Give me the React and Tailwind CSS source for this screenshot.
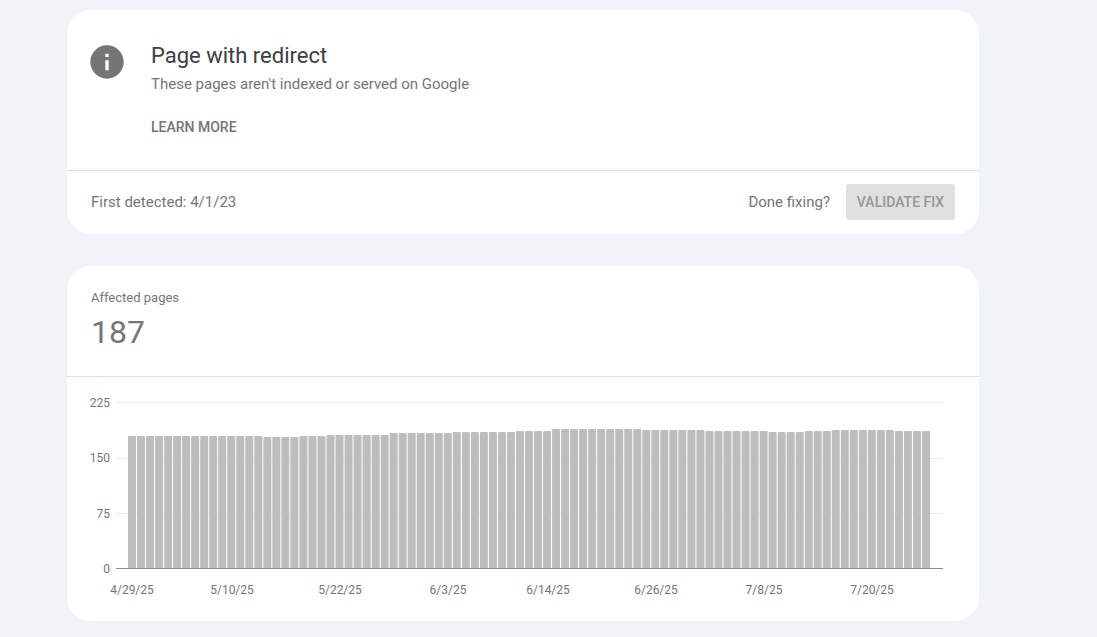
import { MdInfo } from 'react-icons/md'

// [days, affected pages]
const runs = [
  [15, 180],
  [4, 178],
  [3, 180],
  [7, 181],
  [7, 184],
  [7, 185],
  [4, 186],
  [10, 189],
  [7, 188],
  [7, 187],
  [4, 185],
  [3, 187],
  [7, 188],
  [4, 187],
]

const days = runs.flatMap(([count, pages]) => Array(count).fill(pages))

const dateLabels = [
  { day: 0, text: '4/29/25' },
  { day: 11, text: '5/10/25' },
  { day: 23, text: '5/22/25' },
  { day: 35, text: '6/3/25' },
  { day: 46, text: '6/14/25' },
  { day: 58, text: '6/26/25' },
  { day: 70, text: '7/8/25' },
  { day: 82, text: '7/20/25' },
]

const BASE = 192
const LEFT = 61
const STEP = 794 / 88
const BAR = 8

function yOf(value) {
  return BASE - (value / 225) * 166
}

function Bar({ day, pages }) {
  const x = LEFT + day * STEP
  const top = Math.round(yOf(pages) - 0.5)
  return (
    <path
      fill="#bdbdbd"
      d={`M${x} ${BASE - 1}V${top + 1}q0-1 1-1h${BAR - 2}q1 0 1 1V${BASE - 1}z`}
    />
  )
}

function PagesChart() {
  return (
    <svg viewBox="0 0 912 244" className="block w-full" role="img" aria-label="Affected pages">
      {[225, 150, 75].map(value => (
        <path key={value} d={`M49 ${Math.ceil(yOf(value)) - 0.5}H876`} stroke="#ebebeb" />
      ))}
      {days.map((pages, day) => (
        <Bar key={day} day={day} pages={pages} />
      ))}
      <path d={`M49 ${BASE - 0.5}H876`} stroke="#8f8f8f" />
      <g className="fill-[#757575] text-xs">
        {[225, 150, 75, 0].map(value => (
          <text key={value} x="43" y={Math.round(yOf(value)) + 4} textAnchor="end">
            {value}
          </text>
        ))}
        {dateLabels.map(label => (
          <text key={label.text} x={Math.ceil(LEFT + label.day * STEP + 4)} y="217" textAnchor="middle">
            {label.text}
          </text>
        ))}
      </g>
    </svg>
  )
}

export default function App() {
  return (
    <div className="min-h-screen bg-[#f0f3f8] pt-[10px] pb-4 pl-[67px] pr-[118px] font-['Roboto',sans-serif] text-[#757575]">
      <main className="flex flex-col gap-8">

        <section className="rounded-3xl bg-white">
          <div className="flex gap-6 px-5 pt-8 pb-6">
            <MdInfo className="size-10 shrink-0" />
            <div className="flex flex-col items-start">
              <h1 className="text-[22px] leading-7 text-[#3c4043]">Page with redirect</h1>
              <p className="mt-1 text-[15px] leading-5">These pages aren't indexed or served on Google</p>
              <a href="#learn" className="mt-4 pb-[2px] text-sm leading-[34px] font-medium">LEARN MORE</a>
            </div>
          </div>

          <div className="flex items-center justify-between border-t border-[#e0e0e0] px-6 pt-[13px] pb-[14px] text-[15px]">
            <p>First detected: 4/1/23</p>
            <div className="flex items-center gap-4">
              <p>Done fixing?</p>
              <button
                type="button"
                disabled
                className="h-9 min-w-[109px] rounded-[3px] bg-[#e0e0e0] px-2 text-sm font-medium text-[#969696]"
              >
                VALIDATE FIX
              </button>
            </div>
          </div>
        </section>

        <section className="rounded-3xl bg-white">
          <div className="border-b border-[#e0e0e0] px-6 pt-6 pb-6">
            <h2 className="text-[13px] leading-4">Affected pages</h2>
            <p className="mt-2 text-[32px] leading-9 pb-[2px]">187</p>
          </div>
          <PagesChart />
        </section>

      </main>
    </div>
  )
}
